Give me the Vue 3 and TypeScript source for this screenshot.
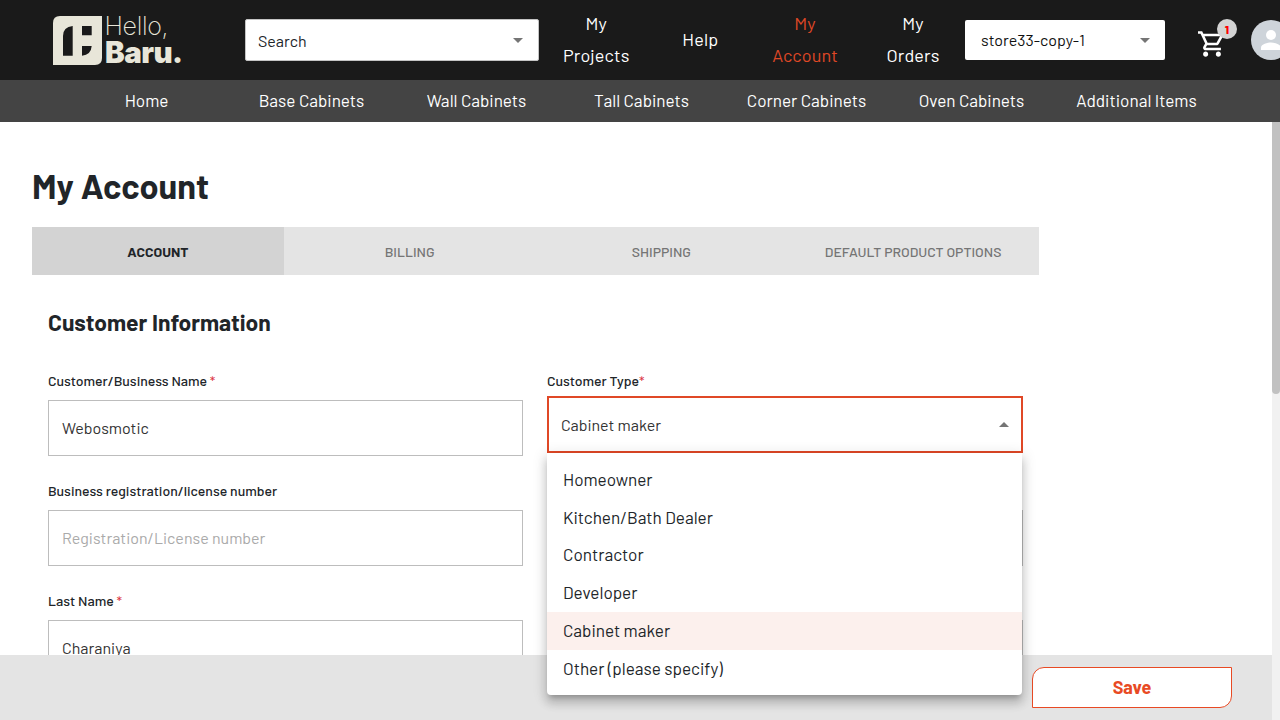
<script setup lang="ts">
import { ref } from 'vue'

interface NavItem {
  lines: string[]
  active?: boolean
}

const navItems: NavItem[] = [
  { lines: ['My', 'Projects'] },
  { lines: ['Help'] },
  { lines: ['My', 'Account'], active: true },
  { lines: ['My', 'Orders'] },
]

const categories: string[] = [
  'Home',
  'Base Cabinets',
  'Wall Cabinets',
  'Tall Cabinets',
  'Corner Cabinets',
  'Oven Cabinets',
  'Additional Items',
]

const tabs: string[] = ['ACCOUNT', 'BILLING', 'SHIPPING', 'DEFAULT PRODUCT OPTIONS']
const activeTab = ref('ACCOUNT')

const customerTypes: string[] = [
  'Homeowner',
  'Kitchen/Bath Dealer',
  'Contractor',
  'Developer',
  'Cabinet maker',
  'Other (please specify)',
]
const customerType = ref('Cabinet maker')
const businessName = ref('Webosmotic')
const license = ref('')
const lastName = ref('Charaniya')
</script>

<template>
  <div class="page">
    <header class="topbar">
      <svg class="logo" width="132" height="74" viewBox="0 -11 132 74">
        <path
          fill="#e8e6d9"
          fill-rule="evenodd"
          d="M7 2H49V44Q49 51 42 51H0V9Q0 2 7 2ZM19.700 12Q10 13 10 22V41.700H19.700ZM29 12V21.300H38.700V12ZM29 32V41.700Q38 41 38.700 32Z"
        />
        <text class="logo-light" x="51.500" y="21" textLength="64">Hello,</text>
        <text class="logo-bold" x="52" y="48.500" textLength="78">Baru.</text>
      </svg>
      <div class="search">
        <span>Search</span>
        <i class="caret"></i>
      </div>
      <nav class="nav">
        <a v-for="item in navItems" :key="item.lines.join(' ')" :class="{ active: item.active }">
          <span v-for="line in item.lines" :key="line">{{ line }}</span>
        </a>
      </nav>
      <div class="store">
        <span>store33-copy-1</span>
        <i class="caret"></i>
      </div>
      <div class="cart">
        <svg width="28" height="28" viewBox="1 1.800 22 22">
          <path
            fill="#fff"
            d="M15.550 13c.75 0 1.410-.41 1.750-1.030l3.580-6.490A.996.996 0 0 0 20.010 4H5.210l-.94-2H1v2h2l3.600 7.590-1.350 2.440C4.520 15.370 5.480 17 7 17h12v-2H7l1.100-2h7.450zM6.160 6h12.150l-2.760 5H8.530L6.160 6zM7 18c-1.100 0-1.990.9-1.990 2S5.900 22 7 22s2-.9 2-2-.9-2-2-2zm10 0c-1.100 0-1.990.9-1.990 2s.89 2 1.990 2 2-.9 2-2-.9-2-2-2z"
          />
        </svg>
        <span class="badge">1</span>
      </div>
      <svg class="avatar" width="40" height="40" viewBox="0 0 40 40">
        <circle cx="20" cy="20" r="20" fill="#ced4da" />
        <circle cx="20" cy="15" r="5" fill="#fff" />
        <path fill="#fff" d="M10 30V27.500C10 24.200 16.700 22.500 20 22.500S30 24.200 30 27.500V30Z" />
      </svg>
    </header>

    <nav class="categories">
      <a v-for="c in categories" :key="c">{{ c }}</a>
    </nav>

    <div class="workspace">
      <div class="column">
        <main class="content">
          <h1>My Account</h1>
          <div class="tabs">
            <button
              v-for="t in tabs"
              :key="t"
              :class="{ selected: t === activeTab }"
              @click="activeTab = t"
            >
              {{ t }}
            </button>
          </div>
          <h2>Customer Information</h2>
          <form class="fields" @submit.prevent>
            <div class="field">
              <label>Customer/Business Name <em>*</em></label>
              <input v-model="businessName" type="text" spellcheck="false" />
            </div>
            <div class="field">
              <label>Customer Type<em>*</em></label>
              <div class="select">
                <span>{{ customerType }}</span>
                <i class="caret up"></i>
              </div>
            </div>
            <div class="field">
              <label>Business registration/license number</label>
              <input v-model="license" type="text" placeholder="Registration/License number" />
            </div>
            <div class="field">
              <label></label>
              <input type="text" />
            </div>
            <div class="field">
              <label>Last Name <em>*</em></label>
              <input v-model="lastName" type="text" spellcheck="false" />
            </div>
            <div class="field">
              <label></label>
              <input type="text" />
            </div>
          </form>
        </main>
        <footer class="footer">
          <button class="save">Save</button>
        </footer>
      </div>
      <div class="scrollbar"><div class="thumb"></div></div>
    </div>

    <ul class="menu">
      <li
        v-for="t in customerTypes"
        :key="t"
        :class="{ selected: t === customerType }"
        @click="customerType = t"
      >
        {{ t }}
      </li>
    </ul>
  </div>
</template>

<style>
body {
  margin: 0;
  overflow: hidden;
}
</style>

<style scoped>
* {
  box-sizing: border-box;
}
.page {
  position: relative;
  display: flex;
  flex-direction: column;
  width: 1280px;
  height: 720px;
  overflow: hidden;
  background: #fff;
  color: #212529;
  font-family: Barlow, Roboto, 'Liberation Sans', sans-serif;
}
.topbar {
  display: flex;
  align-items: center;
  flex: none;
  height: 80px;
  padding-left: 53px;
  background: #1a1a1a;
}
.topbar > * {
  flex: none;
}
.logo {
  margin: 0 60px 0 0;
  fill: #e8e6d9;
}
.logo-light {
  font: 200 25px Inter, sans-serif;
}
.logo-bold {
  font: 900 29.500px Inter, sans-serif;
}
.search,
.store {
  display: flex;
  align-items: center;
  justify-content: space-between;
  background: #fff;
  border-radius: 2px;
  font-size: 16px;
}
.search {
  width: 294px;
  height: 42px;
  padding: 0 15px 0 12px;
  border: 1px solid #c4c4c4;
}
.store {
  width: 200px;
  height: 40px;
  padding: 0 15px 2px 16px;
  color: #111;
}
.caret {
  width: 0;
  height: 0;
  border: 5px solid transparent;
  border-top-color: #757575;
  border-bottom: 0;
}
.search .caret {
  margin-top: 1px;
}
.store .caret {
  margin-top: 3px;
}
.caret.up {
  border-top: 0;
  border-bottom: 5px solid #757575;
}
.nav {
  display: grid;
  grid-template-columns: 114.500px 93.500px 116px 102px;
  align-items: center;
  height: 80px;
  padding-bottom: 2px;
  color: #fff;
  font-size: 18px;
  line-height: 32px;
  letter-spacing: 0.1px;
}
.nav a {
  display: flex;
  flex-direction: column;
  align-items: center;
}
.nav a:last-child {
  margin-right: 2px;
}
.nav .active {
  color: #e04826;
}
.cart {
  position: relative;
  width: 28px;
  height: 28px;
  margin: 10px 25px 0 33px;
}
.badge {
  position: absolute;
  top: -12px;
  left: 19px;
  width: 20px;
  height: 20px;
  border-radius: 50%;
  background: #d3d3d3;
  color: #f00;
  font-size: 12px;
  font-weight: 800;
  line-height: 20px;
  text-align: center;
}
.categories {
  display: grid;
  grid-template-columns: repeat(7, 165px);
  flex: none;
  height: 42px;
  padding-left: 64px;
  background: #444;
  color: #fff;
  font-size: 17.150px;
  line-height: 41px;
  text-align: center;
}
.workspace {
  display: flex;
  flex: 1;
  min-height: 0;
}
.column {
  display: flex;
  flex-direction: column;
  width: 1272px;
}
.content {
  flex: 1;
  min-height: 0;
  overflow: hidden;
  padding: 41px 32px 0;
}
h1 {
  height: 48px;
  margin: 0 0 16px;
  font-size: 34.300px;
  line-height: 45px;
}
.tabs {
  display: grid;
  grid-template-columns: repeat(4, 1fr);
  width: 1007px;
  height: 48px;
  background: #e4e4e4;
}
.tabs button {
  padding: 1px 0 0;
  border: 0;
  background: none;
  color: #757575;
  font: 500 14px Barlow, Roboto, sans-serif;
}
.tabs .selected {
  background: #d3d3d3;
  color: #212529;
  font-weight: 700;
}
h2 {
  margin: 31px 0 0 16px;
  font-size: 22.860px;
  line-height: 32px;
}
.fields {
  display: grid;
  grid-template-columns: 475px 476px;
  grid-auto-rows: 110px;
  column-gap: 24px;
  margin: 32px 0 0 16px;
}
label {
  display: block;
  height: 30px;
  font-size: 14px;
  font-weight: 500;
  line-height: 22px;
}
label em {
  color: #dc3545;
  font-style: normal;
}
input {
  display: block;
  width: 100%;
  height: 56px;
  padding: 0 13px 2px;
  border: 1px solid #bdbdbd;
  border-radius: 0;
  outline: 0;
  background: #fff;
  color: #333;
  font: 16px Barlow, Roboto, sans-serif;
}
input::placeholder {
  color: #aaa;
}
.select {
  display: flex;
  align-items: center;
  justify-content: space-between;
  height: 57px;
  margin-top: -4px;
  padding: 0 12px;
  border: 2px solid #e04826;
  color: #333;
  font-size: 16px;
}
.footer {
  display: flex;
  justify-content: flex-end;
  flex: none;
  height: 65px;
  padding: 12px 40px 0 0;
  background: #e4e4e4;
}
.save {
  width: 200px;
  height: 41px;
  padding: 0 0 2px;
  border: 1px solid #e84a24;
  border-radius: 12px 0;
  background: #fff;
  color: #e84a24;
  font: 700 18px Barlow, Roboto, sans-serif;
}
.scrollbar {
  width: 8px;
  background: #f1f1f1;
}
.thumb {
  height: 272px;
  border-radius: 0 0 4px 4px;
  background: #c1c1c1;
}
.menu {
  position: absolute;
  top: 453px;
  left: 547px;
  width: 475px;
  height: 242px;
  margin: 0;
  padding: 7.800px 0;
  border-radius: 0 0 4px 4px;
  background: #fff;
  box-shadow:
    0 5px 5px -3px rgba(0, 0, 0, 0.2),
    0 8px 10px 1px rgba(0, 0, 0, 0.14),
    0 3px 14px 2px rgba(0, 0, 0, 0.12);
  list-style: none;
}
.menu li {
  height: 37.800px;
  padding-left: 16px;
  font-size: 17.150px;
  line-height: 36px;
}
.menu .selected {
  background: #fcf0ed;
}
</style>
